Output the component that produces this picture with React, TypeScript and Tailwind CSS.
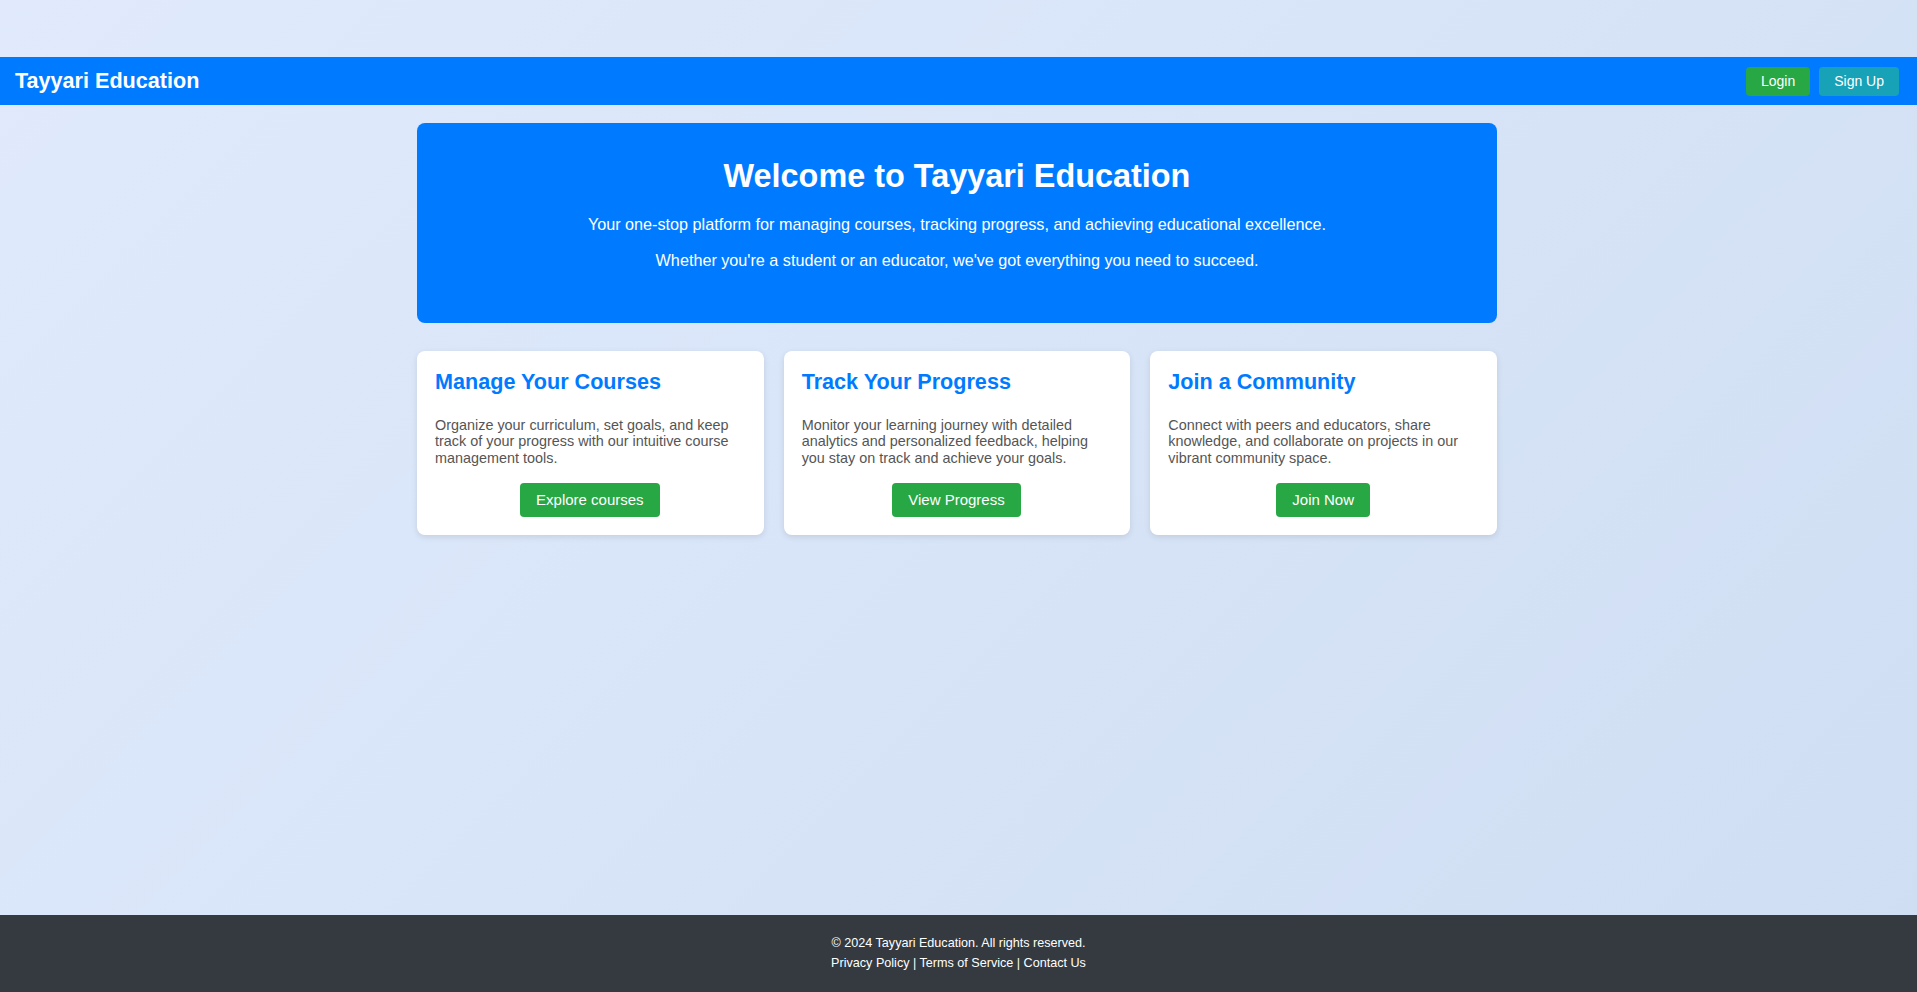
import React from 'react'

// ─── Data ───────────────────────────────────────────────────────────────

const features = [
  {
    title: 'Manage Your Courses',
    body: 'Organize your curriculum, set goals, and keep track of your progress with our intuitive course management tools.',
    cta: 'Explore courses',
  },
  {
    title: 'Track Your Progress',
    body: 'Monitor your learning journey with detailed analytics and personalized feedback, helping you stay on track and achieve your goals.',
    cta: 'View Progress',
  },
  {
    title: 'Join a Community',
    body: 'Connect with peers and educators, share knowledge, and collaborate on projects in our vibrant community space.',
    cta: 'Join Now',
  },
]

// ─── Navbar ─────────────────────────────────────────────────────────────

function Navbar() {
  return (
    <header className="flex h-[48px] items-center justify-between bg-[#007bff] pl-[15px] pr-[18px]">
      <div className="text-[21.6px] font-bold text-white">Tayyari Education</div>
      <div className="flex items-center gap-[9px]">
        <button className="rounded-[4px] bg-[#28a745] px-[15px] py-[6.5px] text-[14px] leading-[16px] text-white">
          Login
        </button>
        <button className="rounded-[4px] bg-[#17a2b8] px-[15px] py-[6.5px] text-[14px] leading-[16px] text-white">
          Sign Up
        </button>
      </div>
    </header>
  )
}

// ─── Feature card ───────────────────────────────────────────────────────

function FeatureCard({ title, body, cta }: { title: string; body: string; cta: string }) {
  return (
    <div className="flex flex-col rounded-[8px] bg-white pb-[18px] pl-[18px] pr-[19px] pt-[19px] shadow-[0_2px_6px_rgba(0,0,0,0.1)]">
      <h2 className="text-[21.6px] leading-[24px] font-bold text-[#007bff]">{title}</h2>
      <p className="mt-[23px] text-[14.4px] leading-[16.5px] text-[#555]">{body}</p>
      <div className="mt-[17px] flex justify-center">
        <button className="rounded-[4px] bg-[#28a745] px-4 py-2 text-[15px] leading-[18px] text-white">
          {cta}
        </button>
      </div>
    </div>
  )
}

// ─── App ────────────────────────────────────────────────────────────────

export default function App() {
  return (
    <div
      className="flex min-h-screen flex-col bg-[linear-gradient(135deg,#e0eafc,#cfdef3)] pt-[57px]"
      style={{ fontFamily: '"Liberation Sans", Arial, sans-serif' }}
    >
      <Navbar />

      <main className="flex-1 pr-[3px]">
        <div className="mx-auto mt-[18px] w-[1080px]">
          {/* Hero */}
          <section className="rounded-[8px] bg-[#007bff] px-10 pb-[54px] pt-[35px] text-center text-white">
            <h1 className="text-[32.4px] leading-[37px] font-bold">Welcome to Tayyari Education</h1>
            <p className="mt-[19.5px] text-[16.2px] leading-[18.4px]">
              Your one-stop platform for managing courses, tracking progress, and achieving educational excellence.
            </p>
            <p className="mt-[17.6px] text-[16.2px] leading-[18.4px]">
              Whether you're a student or an educator, we've got everything you need to succeed.
            </p>
          </section>

          {/* Features */}
          <section className="mt-[28px] grid grid-cols-3 gap-5">
            {features.map((f) => (
              <FeatureCard key={f.title} {...f} />
            ))}
          </section>
        </div>
      </main>

      <footer className="bg-[#343a40] pb-[19px] pt-[18px] text-center text-[12.6px] leading-[20px] text-white">
        <p>© 2024 Tayyari Education. All rights reserved.</p>
        <p>
          <a href="#" className="text-white">Privacy Policy</a> |{' '}
          <a href="#" className="text-white">Terms of Service</a> |{' '}
          <a href="#" className="text-white">Contact Us</a>
        </p>
      </footer>
    </div>
  )
}
